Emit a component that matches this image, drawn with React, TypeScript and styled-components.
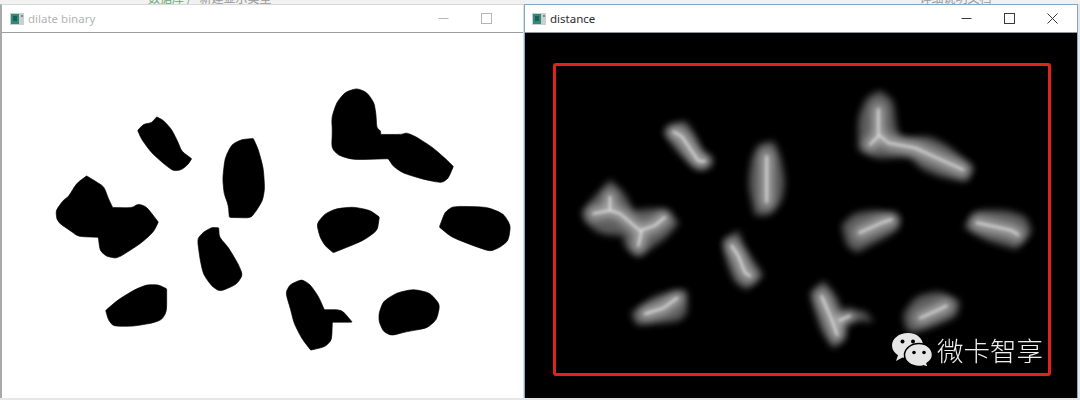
import React from "react"
import styled, { createGlobalStyle } from "styled-components"

type Pt = [number, number]

// outlines are in zoomed coords, each group has its own origin and gets scaled by 1/3
const binaryGroups: { origin: Pt; shapes: Pt[][] }[] = [
  {
    origin: [40, 80],
    shapes: [
      [[293,148],[310,130],[335,125],[350,108],[370,118],[395,145],[415,185],[425,210],[455,232],[445,248],[425,265],[400,268],[375,250],[335,215],[305,175]],
      [[575,190],[605,175],[640,172],[655,205],[670,260],[674,320],[668,355],[650,385],[632,408],[568,406],[565,370],[552,335],[548,290],[555,230]],
      [[48,385],[70,355],[85,345],[110,305],[140,283],[165,298],[192,315],[205,350],[218,377],[275,378],[295,366],[320,375],[355,420],[340,450],[300,485],[232,528],[200,522],[180,505],[175,465],[115,463],[90,445],[60,425],[50,410]],
      [[472,470],[490,450],[515,436],[536,437],[538,465],[565,495],[595,545],[608,577],[590,605],[540,626],[515,610],[490,575],[480,530]],
      [[197,682],[235,650],[285,620],[320,606],[355,606],[380,618],[380,685],[365,710],[335,720],[280,729],[220,729],[205,710]],
    ],
  },
  {
    origin: [270, 80],
    shapes: [
      [[185,110],[200,65],[225,35],[260,23],[290,35],[312,65],[318,100],[320,140],[332,150],[332,160],[395,160],[410,155],[440,168],[490,200],[535,240],[550,255],[535,290],[515,304],[460,293],[400,275],[370,255],[355,232],[250,235],[205,222],[185,200],[187,150]],
      [[140,425],[165,395],[200,380],[250,375],[300,385],[328,405],[322,445],[280,475],[190,511],[165,490],[150,465]],
      [[508,435],[525,390],[550,373],[650,375],[700,395],[722,430],[715,475],[690,495],[660,507],[610,490],[545,465]],
      [[47,630],[60,605],[95,590],[120,605],[145,640],[163,680],[215,680],[247,717],[187,717],[185,770],[165,790],[122,800],[95,765],[72,720],[62,680]],
      [[327,690],[340,655],[380,630],[430,619],[480,630],[510,665],[500,710],[470,735],[410,745],[365,757],[340,745],[327,715]],
    ],
  },
]

const distanceGroups: { origin: Pt; shapes: { outline: Pt[]; ridges: Pt[][] }[] }[] = [
  {
    origin: [570, 80],
    shapes: [
      { outline: [[280,150],[325,125],[345,120],[375,160],[400,215],[430,238],[395,265],[370,255],[320,210]], ridges: [[[310,152],[335,165],[362,205],[385,238],[405,240]]] },
      { outline: [[545,230],[565,190],[610,180],[630,220],[645,300],[635,360],[600,400],[555,400],[535,310]], ridges: [[[590,225],[590,310],[590,360]]] },
      { outline: [[35,390],[60,360],[120,295],[160,330],[190,385],[275,378],[328,420],[290,465],[205,525],[165,495],[160,460],[90,455],[45,420]], ridges: [[[70,395],[120,385],[150,395],[210,445],[255,430],[285,405]],[[120,385],[120,345]],[[215,445],[205,490]]] },
      { outline: [[458,475],[505,445],[520,490],[580,578],[530,620],[495,600],[470,540]], ridges: [[[485,490],[505,520],[525,570],[540,580]]] },
      { outline: [[183,690],[260,635],[350,622],[352,690],[325,715],[200,725]], ridges: [[[225,692],[280,675],[322,645]]] },
    ],
  },
  {
    origin: [800, 80],
    shapes: [
      { outline: [[175,110],[200,50],[240,30],[280,60],[290,150],[310,172],[385,165],[440,190],[522,258],[500,300],[420,285],[360,260],[330,225],[230,232],[175,205]], ridges: [[[235,85],[235,160],[265,185],[345,200],[400,225],[490,265]],[[235,165],[210,190]]] },
      { outline: [[125,430],[160,395],[230,383],[300,405],[295,445],[170,510],[140,490]], ridges: [[[178,452],[250,420],[275,412]]] },
      { outline: [[492,435],[525,385],[620,385],[680,405],[695,450],[650,500],[560,475]], ridges: [[[530,422],[635,445],[655,458]]] },
    ],
  },
  {
    origin: [800, 270],
    shapes: [
      { outline: [[30,60],[70,25],[110,70],[130,125],[190,112],[222,145],[135,140],[140,190],[100,225],[65,175],[40,100]], ridges: [[[65,70],[95,140],[112,185]],[[118,142],[150,128]]] },
      { outline: [[310,120],[350,70],[420,55],[480,85],[470,130],[400,160],[335,180],[315,160]], ridges: [[[360,135],[420,108],[440,98]]] },
    ],
  },
]

// closed path: gentle bends get rounded off, real corners stay crisp
function smoothPath(pts: Pt[]) {
  const n = pts.length
  let d = ""
  pts.forEach((p, i) => {
    const prev = pts[(i - 1 + n) % n]
    const next = pts[(i + 1) % n]
    const inAngle = Math.atan2(p[1] - prev[1], p[0] - prev[0])
    const outAngle = Math.atan2(next[1] - p[1], next[0] - p[0])
    const turn = Math.abs(((outAngle - inAngle + 3 * Math.PI) % (2 * Math.PI)) - Math.PI)
    const soften = turn > 1 ? 0.06 : 0.3
    const a = [p[0] + (prev[0] - p[0]) * soften, p[1] + (prev[1] - p[1]) * soften]
    const b = [p[0] + (next[0] - p[0]) * soften, p[1] + (next[1] - p[1]) * soften]
    d += `${i === 0 ? "M" : "L"}${a[0]} ${a[1]}Q${p[0]} ${p[1]} ${b[0]} ${b[1]}`
  })
  return d + "Z"
}

const linePoints = (pts: Pt[]) => pts.map((p) => p.join(",")).join(" ")

const GlobalStyle = createGlobalStyle`
  html, body {
    margin: 0;
    padding: 0;
    background: #e9edf1;
  }
`

const Desktop = styled.div`
  width: 1080px;
  height: 400px;
  overflow: hidden;
  display: flex;
  flex-direction: column;
  background: #e4e6e8;
  font-family: "Noto Sans", "Noto Sans CJK SC", sans-serif;
`

const BehindStrip = styled.div`
  height: 4px;
  flex: none;
  overflow: hidden;
  position: relative;
  background: #f1f1f1;
  display: flex;
  font-family: "Noto Sans CJK SC", sans-serif;
  font-size: 12px;
  line-height: 12px;
`

const BehindText = styled.span<{ $left: number; $color: string }>`
  margin-left: ${(p) => p.$left}px;
  margin-top: -8px;
  color: ${(p) => p.$color};
  white-space: nowrap;
`

const WindowRow = styled.div`
  display: flex;
  flex: none;
  height: 394px;
`

const Window = styled.section<{ $active?: boolean; $width: number }>`
  width: ${(p) => p.$width}px;
  flex: none;
  display: flex;
  flex-direction: column;
  box-sizing: border-box;
  background: #fff;
  border-top: 1px solid ${(p) => (p.$active ? "#7fa8c9" : "#d8d8d8")};
  border-left: ${(p) => (p.$active ? "1px solid #7fa8c9" : "2px solid #a9a9a9")};
  border-right: ${(p) => (p.$active ? "1px solid #7fa8c9" : "1px solid #cfe0ee")};
`

const TitleBar = styled.header<{ $active?: boolean }>`
  height: 28px;
  flex: none;
  box-sizing: border-box;
  display: flex;
  align-items: center;
  padding-left: ${(p) => (p.$active ? "7px" : "8px")};
  background: #fff;
  border-bottom: 1px solid ${(p) => (p.$active ? "#8f9499" : "#9d9d9d")};
  color: ${(p) => (p.$active ? "#2b2b2b" : "#b4b4b4")};
  font-size: 11.5px;
`

const TitleText = styled.span`
  margin-left: 4px;
  flex: 1;
`

const ChromeButton = styled.span<{ $gap: number }>`
  width: 11px;
  height: 11px;
  flex: none;
  display: flex;
  margin-right: ${(p) => p.$gap}px;
`

const Canvas = styled.div<{ $dark?: boolean }>`
  position: relative;
  flex: 1;
  min-height: 0;
  background: ${(p) => (p.$dark ? "#000" : "#fff")};
`

const Picture = styled.svg`
  display: block;
  width: 100%;
  height: 100%;
`

const RedFrame = styled.div`
  position: absolute;
  left: 28px;
  top: 30px;
  width: 492px;
  height: 307px;
  border: 3px solid #e2231a;
  border-radius: 3px;
`

const Watermark = styled.div`
  position: absolute;
  left: 366px;
  top: 298px;
  display: flex;
  align-items: center;
  gap: 4px;
  color: #eeeeee;
  font-family: "Noto Sans CJK SC", sans-serif;
  font-weight: 300;
  font-size: 26.5px;
  line-height: 38px;
  white-space: nowrap;
`

function AppIcon() {
  return (
    <svg width="14" height="12" viewBox="0 0 14 12">
      <rect width="14" height="12" fill="#c9d0d0" />
      <rect x="1" y="1" width="8" height="10" fill="#2f8a78" />
      <rect x="3" y="3" width="4" height="5" fill="#1f5f5a" />
      <rect x="11" y="2" width="2" height="2" fill="#7d8a8a" />
    </svg>
  )
}

function WindowButtons({ color, close }: { color: string; close?: boolean }) {
  return (
    <>
      <ChromeButton $gap={32}>
        <svg width="11" height="11" viewBox="0 0 11 11">
          <path d="M0.5 5.5h10" stroke={color} strokeWidth="1" />
        </svg>
      </ChromeButton>
      <ChromeButton $gap={close ? 32 : 31}>
        <svg width="11" height="11" viewBox="0 0 11 11">
          <rect x="0.5" y="0.5" width="10" height="10" fill="none" stroke={color} strokeWidth="1" />
        </svg>
      </ChromeButton>
      {close && (
        <ChromeButton $gap={19}>
          <svg width="11" height="11" viewBox="0 0 11 11">
            <path d="M0.5 0.5l10 10M10.5 0.5l-10 10" stroke={color} strokeWidth="1" />
          </svg>
        </ChromeButton>
      )}
    </>
  )
}

function BinaryPicture() {
  return (
    <Picture viewBox="2 33 521 361" preserveAspectRatio="none">
      {binaryGroups.map((g, i) => (
        <g key={i} transform={`translate(${g.origin[0]} ${g.origin[1]}) scale(${1 / 3})`}>
          {g.shapes.map((s, j) => (
            <path key={j} d={smoothPath(s)} fill="#000" stroke="#000" strokeWidth="2" strokeLinejoin="round" />
          ))}
        </g>
      ))}
    </Picture>
  )
}

function DistancePicture() {
  const region = { filterUnits: "userSpaceOnUse" as const, x: 525, y: 33, width: 552, height: 365 }
  const renderLayer = (render: (s: { outline: Pt[]; ridges: Pt[][] }, k: string) => React.ReactNode) =>
    distanceGroups.map((g, i) => (
      <g key={i} transform={`translate(${g.origin[0]} ${g.origin[1]}) scale(${1 / 3})`}>
        {g.shapes.map((s, j) => render(s, `${i}-${j}`))}
      </g>
    ))

  return (
    <Picture viewBox="525 33 552 361" preserveAspectRatio="none">
      <defs>
        <filter id="soft" {...region}>
          <feGaussianBlur stdDeviation="3.6" />
        </filter>
        <filter id="mid" {...region}>
          <feGaussianBlur stdDeviation="4.5" />
        </filter>
        <filter id="fine" {...region}>
          <feGaussianBlur stdDeviation="1.7" />
        </filter>
      </defs>
      <g filter="url(#soft)">
        {renderLayer((s, k) => (
          <path key={k} d={smoothPath(s.outline)} fill="#5c5c5c" />
        ))}
      </g>
      <g filter="url(#mid)" opacity="0.9">
        {renderLayer((s, k) =>
          s.ridges.map((r, n) => (
            <polyline key={`${k}-${n}`} points={linePoints(r)} fill="none" stroke="#b4b4b4" strokeWidth="34" strokeLinecap="round" strokeLinejoin="round" />
          )),
        )}
      </g>
      <g filter="url(#fine)" opacity="0.7">
        {renderLayer((s, k) =>
          s.ridges.map((r, n) => (
            <polyline key={`${k}-${n}`} points={linePoints(r)} fill="none" stroke="#f4f4f4" strokeWidth="6" strokeLinecap="round" strokeLinejoin="round" />
          )),
        )}
      </g>
    </Picture>
  )
}

function WeChatMark() {
  return (
    <svg width="42" height="36" viewBox="0 0 42 36">
      <path d="M17 1C8 1 1 6.500 1 13.500c0 4 2.300 7.400 6 9.700L5 29l6.500-3.400c1.800.5 3.600.8 5.500.8 9 0 15-5.500 15-12.900C32 6.500 26 1 17 1z" fill="#e6e6e6" />
      <circle cx="11.500" cy="9.500" r="2" fill="#000" />
      <circle cx="22" cy="9.500" r="2" fill="#000" />
      <path d="M28 11.500c-8 0-14.500 5-14.500 11.500S20 34.500 28 34.500c1.500 0 3-.2 4.300-.6l5 1.600-1.300-4.200c3.400-2 5.500-4.900 5.500-8.300 0-6.500-5.500-11.500-13.500-11.500z" fill="#e6e6e6" stroke="#000" strokeWidth="1.500" />
      <circle cx="23" cy="20.500" r="1.800" fill="#000" />
      <circle cx="33" cy="20.500" r="1.800" fill="#000" />
    </svg>
  )
}

export default function App() {
  return (
    <>
      <GlobalStyle />
      <Desktop>
        <BehindStrip>
          <BehindText $left={148} $color="#6bab72">数据库 /</BehindText>
          <BehindText $left={8} $color="#9a9a9a">新建显示类型</BehindText>
          <BehindText $left={648} $color="#9a9a9a">详细说明文档</BehindText>
        </BehindStrip>
        <WindowRow>
          <Window $width={524}>
            <TitleBar>
              <AppIcon />
              <TitleText>dilate binary</TitleText>
              <WindowButtons color="#b5b5b5" />
            </TitleBar>
            <Canvas>
              <BinaryPicture />
            </Canvas>
          </Window>
          <Window $active $width={554}>
            <TitleBar $active>
              <AppIcon />
              <TitleText>distance</TitleText>
              <WindowButtons color="#3a3a3a" close />
            </TitleBar>
            <Canvas $dark>
              <DistancePicture />
              <RedFrame />
              <Watermark>
                <WeChatMark />
                微卡智享
              </Watermark>
            </Canvas>
          </Window>
        </WindowRow>
      </Desktop>
    </>
  )
}
